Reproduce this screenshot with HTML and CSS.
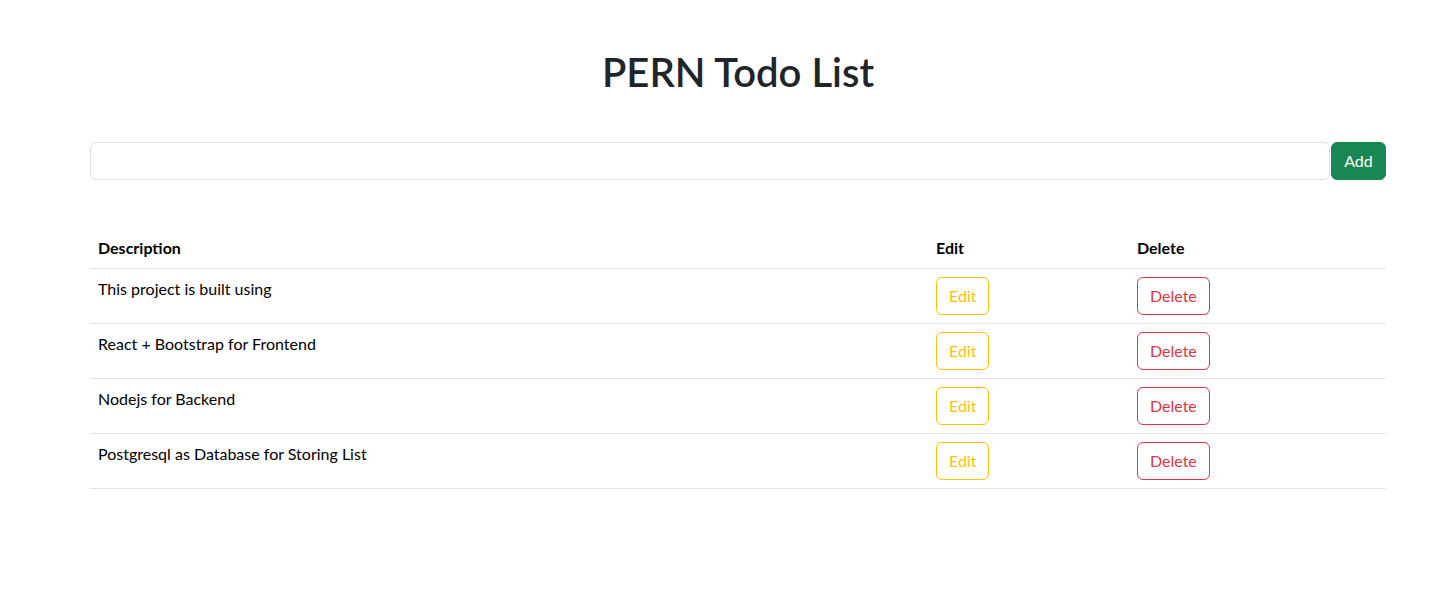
FILE: index.html
```html
<!DOCTYPE html>
<html lang="en">
<head>
<meta charset="utf-8">
<title>PERN Todo List</title>
<link rel="stylesheet" href="styles.css">
</head>
<body>
<div class="container">
  <h1 class="title">PERN Todo List</h1>
  <form class="add-form">
    <input class="form-control" type="text">
    <button class="btn btn-success" type="button">Add</button>
  </form>
  <table class="table">
    <thead>
      <tr><th class="col-desc">Description</th><th class="col-edit">Edit</th><th class="col-del">Delete</th></tr>
    </thead>
    <tbody>
      <tr><td>This project is built using</td><td><button class="btn btn-outline-warning" type="button">Edit</button></td><td><button class="btn btn-outline-danger" type="button">Delete</button></td></tr>
      <tr><td>React + Bootstrap for Frontend</td><td><button class="btn btn-outline-warning" type="button">Edit</button></td><td><button class="btn btn-outline-danger" type="button">Delete</button></td></tr>
      <tr><td>Nodejs for Backend</td><td><button class="btn btn-outline-warning" type="button">Edit</button></td><td><button class="btn btn-outline-danger" type="button">Delete</button></td></tr>
      <tr><td>Postgresql as Database for Storing List</td><td><button class="btn btn-outline-warning" type="button">Edit</button></td><td><button class="btn btn-outline-danger" type="button">Delete</button></td></tr>
    </tbody>
  </table>
</div>
</body>
</html>
```
FILE: styles.css
```css
* { box-sizing: border-box; }
html, body { margin: 0; padding: 0; background: #fff; }
body {
  font-family: "Lato", "Open Sans", "Liberation Sans", sans-serif;
  font-size: 16px;
  line-height: 1.5;
  color: #212529;
}
.container {
  width: 1296px;
  margin-left: 90px;
}
.title {
  margin: 48px 0 0;
  font-size: 40px;
  font-weight: 600;
  line-height: 48px;
  text-align: center;
  color: #212529;
}
.add-form {
  display: flex;
  margin-top: 46px;
}
.form-control {
  flex: 1;
  height: 38px;
  padding: 6px 12px;
  font: inherit;
  border: 1px solid #dee2e6;
  border-radius: 6px;
  background: #fff;
  outline: none;
}
.btn {
  display: inline-block;
  height: 38px;
  padding: 6px 12px;
  font: inherit;
  font-size: 16px;
  line-height: 24px;
  border: 1px solid transparent;
  border-radius: 6px;
  background: transparent;
  cursor: pointer;
}
.btn-success {
  margin-left: 1px;
  width: 55px;
  color: #fff;
  background: #198754;
  border-color: #198754;
}
.btn-outline-warning { color: #ffc107; border-color: #ffc107; }
.btn-outline-danger { color: #dc3545; border-color: #dc3545; }
.table {
  width: 100%;
  margin-top: 48px;
  border-collapse: collapse;
  color: #000;
}
.table th, .table td {
  padding: 8px;
  text-align: left;
  vertical-align: top;
  border-bottom: 1px solid #dee2e6;
  line-height: 24px;
}
.table th { font-weight: 700; }
.col-desc { width: 838px; }
.col-edit { width: 201px; }
```
